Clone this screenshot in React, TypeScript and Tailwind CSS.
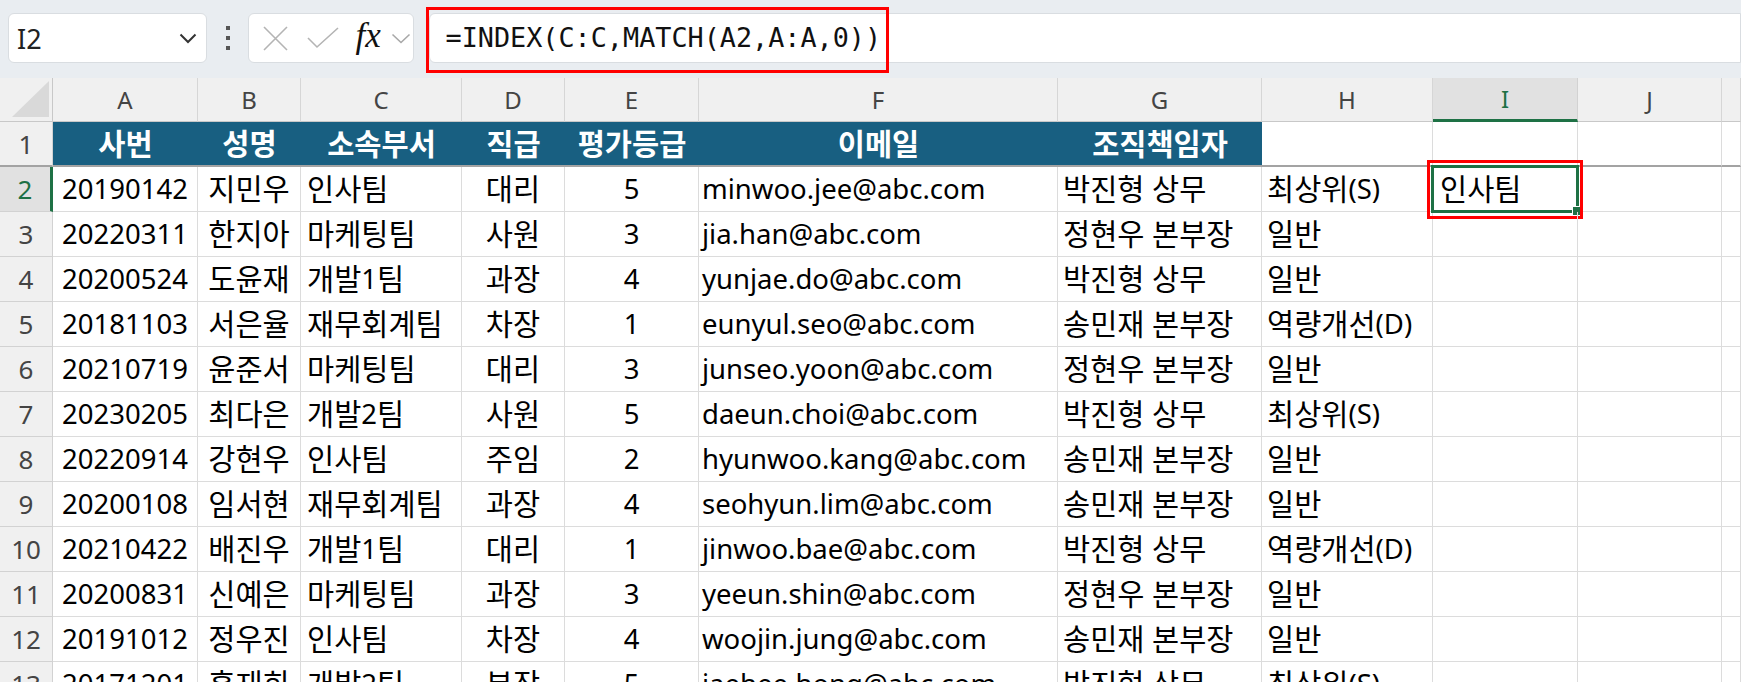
import React from "react";

type Row = [string, string, string, string, string, string, string, string];

const rows: Row[] = [
  ["20190142", "지민우", "인사팀", "대리", "5", "minwoo.jee@abc.com", "박진형 상무", "최상위(S)"],
  ["20220311", "한지아", "마케팅팀", "사원", "3", "jia.han@abc.com", "정현우 본부장", "일반"],
  ["20200524", "도윤재", "개발1팀", "과장", "4", "yunjae.do@abc.com", "박진형 상무", "일반"],
  ["20181103", "서은율", "재무회계팀", "차장", "1", "eunyul.seo@abc.com", "송민재 본부장", "역량개선(D)"],
  ["20210719", "윤준서", "마케팅팀", "대리", "3", "junseo.yoon@abc.com", "정현우 본부장", "일반"],
  ["20230205", "최다은", "개발2팀", "사원", "5", "daeun.choi@abc.com", "박진형 상무", "최상위(S)"],
  ["20220914", "강현우", "인사팀", "주임", "2", "hyunwoo.kang@abc.com", "송민재 본부장", "일반"],
  ["20200108", "임서현", "재무회계팀", "과장", "4", "seohyun.lim@abc.com", "송민재 본부장", "일반"],
  ["20210422", "배진우", "개발1팀", "대리", "1", "jinwoo.bae@abc.com", "박진형 상무", "역량개선(D)"],
  ["20200831", "신예은", "마케팅팀", "과장", "3", "yeeun.shin@abc.com", "정현우 본부장", "일반"],
  ["20191012", "정우진", "인사팀", "차장", "4", "woojin.jung@abc.com", "송민재 본부장", "일반"],
  ["20171201", "홍재희", "개발2팀", "부장", "5", "jaehee.hong@abc.com", "박진형 상무", "최상위(S)"],
];

const titles = ["사번", "성명", "소속부서", "직급", "평가등급", "이메일", "조직책임자"];
const letters = ["A", "B", "C", "D", "E", "F", "G", "H", "I", "J", ""];

// per-column horizontal alignment for A..H
const align = [
  "justify-center",
  "justify-center",
  "justify-start pl-[6px]",
  "justify-center",
  "justify-center",
  "justify-start pl-[3px]",
  "justify-start pl-[5px]",
  "justify-start pl-[5px]",
];

const cell = "h-[45px] flex items-center whitespace-nowrap border-r border-b border-[#dcdcdc] text-[27.5px] leading-none text-black";
const rowHead = "h-[45px] flex items-center justify-center border-r border-b border-[#d2d2d2] text-[26px] leading-none";

// Hangul runs are set a little larger than the latin/digit runs
const Txt = ({ s }: { s: string }) => (
  <>
    {s.split(/([가-힣]+(?:\s+[가-힣]+)*)/).map((part, i) =>
      /[가-힣]/.test(part) ? (
        <span key={i} className="text-[29.5px]">
          {part}
        </span>
      ) : (
        part
      )
    )}
  </>
);

const NameBox = () => (
  <div className="ml-[8px] w-[201px] h-[50px] bg-white rounded-[6px] border border-[#d9dde1] flex items-center pl-[8px] pr-[9px]">
    <span className="text-[27px] text-[#222] leading-none">I2</span>
    <svg className="ml-auto" width="18" height="11" viewBox="0 0 18 11" fill="none">
      <path d="M1.5 1.5 L9 9 L16.5 1.5" stroke="#333" strokeWidth="2" />
    </svg>
  </div>
);

const Dots = () => (
  <div className="ml-[19px] w-[4px] h-[50px] flex flex-col items-center justify-center gap-[6px]">
    <span className="w-[4px] h-[4px] bg-[#555]" />
    <span className="w-[4px] h-[4px] bg-[#555]" />
    <span className="w-[4px] h-[4px] bg-[#555]" />
  </div>
);

const Controls = () => (
  <div className="ml-[18px] w-[168px] h-[50px] bg-white rounded-[6px] border border-[#d9dde1] flex items-center pl-[14px]">
    <svg width="25" height="25" viewBox="0 0 25 25" fill="none">
      <path d="M1 1 L24 24 M24 1 L1 24" stroke="#b4b4b4" strokeWidth="1.6" />
    </svg>
    <svg className="ml-[19px]" width="32" height="22" viewBox="0 0 32 22" fill="none">
      <path d="M1 11 L10 20 L31 1" stroke="#b4b4b4" strokeWidth="1.6" />
    </svg>
    <span className="ml-[17px] font-['Liberation_Serif',serif] italic text-[35px] leading-none text-[#111] -mt-[5px]">fx</span>
    <svg className="ml-[10px]" width="20" height="11" viewBox="0 0 20 11" fill="none">
      <path d="M1.5 1.5 L10 9.5 L18.5 1.5" stroke="#a8a8a8" strokeWidth="1.6" />
    </svg>
  </div>
);

const FormulaInput = () => (
  <div className="relative ml-[15px] w-[1330px] h-[50px] bg-white rounded-l-[6px] border border-[#d9dde1] flex items-center pl-[16px]">
    <span className="font-['DejaVu_Sans_Mono',monospace] text-[26.8px] leading-none text-[#111]">
      =INDEX(C:C,MATCH(A2,A:A,0))
    </span>
    {/* red callout around the formula text */}
    <div className="absolute -left-[4px] -top-[7px] w-[463px] h-[66px] border-[3px] border-[#ff0000]" />
  </div>
);

const Corner = () => (
  <div className="h-[44px] bg-[#f0f0f0] border-r border-b border-[#c8c8c8] flex items-end justify-end pr-[3px] pb-[4px]">
    <svg width="37" height="36" viewBox="0 0 37 36">
      <polygon points="37,0 37,36 0,36" fill="#d9d9d9" />
    </svg>
  </div>
);

export default function App() {
  return (
    <div className="w-[1741px] h-[682px] overflow-hidden bg-white font-['Noto_Sans','Noto_Sans_CJK_KR',sans-serif]">
      {/* formula bar */}
      <div className="h-[78px] bg-[#e9edf1] flex items-start pt-[13px] overflow-hidden">
        <NameBox />
        <Dots />
        <Controls />
        <FormulaInput />
      </div>

      {/* sheet grid */}
      <div className="grid grid-cols-[53px_145px_103px_161px_103px_134px_359px_204px_171px_145px_144px_1fr]">
        <Corner />
        {letters.map((l, i) =>
          l === "I" ? (
            <div
              key={i}
              className="h-[44px] bg-[#e1e1e1] border-r border-[#d2d2d2] border-b-[3px] border-b-[#1e7145] flex items-center justify-center text-[24px] text-[#1e7145] leading-none"
            >
              {l}
            </div>
          ) : (
            <div
              key={i}
              className="h-[44px] bg-[#f0f0f0] border-r border-[#d6d6d6] border-b border-b-[#c8c8c8] flex items-center justify-center text-[24px] text-[#444] leading-none"
            >
              {l}
            </div>
          )
        )}

        {/* title row */}
        <div className={`${rowHead} bg-[#f0f0f0] text-[#444] border-b-2 border-b-[#a3a3a3]`}>1</div>
        {titles.map((t) => (
          <div
            key={t}
            className="h-[45px] flex items-center justify-center bg-[#185f81] text-white font-bold text-[29.5px] leading-none whitespace-nowrap border-b-2 border-b-[#a3a3a3]"
          >
            {t}
          </div>
        ))}
        {[0, 1, 2, 3].map((k) => (
          <div key={k} className="h-[45px] border-r border-[#dcdcdc] border-b-2 border-b-[#a3a3a3]" />
        ))}

        {rows.map((r, ri) => {
          const n = ri + 2;
          const active = n === 2;
          return (
            <React.Fragment key={n}>
              <div
                className={`${rowHead} ${
                  active
                    ? "bg-[#e1e1e1] text-[#1e7145] border-r-[3px] border-r-[#1e7145]"
                    : "bg-[#f0f0f0] text-[#444]"
                }`}
              >
                {n}
              </div>
              {r.map((c, ci) => (
                <div key={ci} className={`${cell} ${align[ci]}`}>
                  <Txt s={c} />
                </div>
              ))}
              <div className={`${cell} justify-start pl-[7px] relative`}>
                {active && (
                  <>
                    <Txt s="인사팀" />
                    <div className="absolute -left-[2px] -top-[2px] -right-[2px] -bottom-[2px] border-[3px] border-[#1e7145]" />
                    <div className="absolute -right-[5px] -bottom-[5px] w-[10px] h-[10px] bg-[#1e7145] border border-white" />
                    <div className="absolute -left-[6px] -top-[7px] -right-[6px] -bottom-[8px] border-[3px] border-[#ff0000]" />
                  </>
                )}
              </div>
              <div className={cell} />
              <div className={cell} />
            </React.Fragment>
          );
        })}
      </div>
    </div>
  );
}
